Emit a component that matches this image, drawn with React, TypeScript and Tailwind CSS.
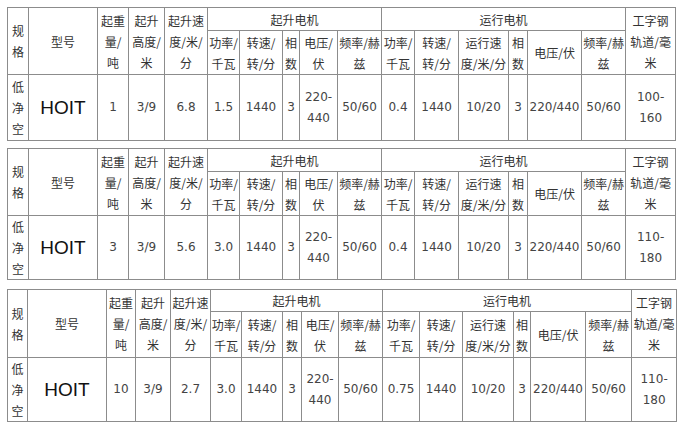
import React from 'react';

type Spec = {
    cols: string[];
    rows: string[];
    gap: string;
    load: string;
    speed: string;
    power: string;
    travelPower: string;
    rail: [string, string];
};

const tables: Spec[] = [
    {
        cols: ['w-[21px]', 'w-[69px]', 'w-[31px]', 'w-[36px]', 'w-[43px]', 'w-[32px]', 'w-[43px]', 'w-[17px]', 'w-[38px]', 'w-[44px]', 'w-[33px]', 'w-[44px]', 'w-[50px]', 'w-[19px]', 'w-[54px]', 'w-[44px]', 'w-[50px]'],
        rows: ['h-[23px]', 'h-[44px]', 'h-[66px]'],
        gap: 'mt-0',
        load: '1',
        speed: '6.8',
        power: '1.5',
        travelPower: '0.4',
        rail: ['100-', '160'],
    },
    {
        cols: ['w-[21px]', 'w-[69px]', 'w-[31px]', 'w-[36px]', 'w-[43px]', 'w-[32px]', 'w-[43px]', 'w-[17px]', 'w-[38px]', 'w-[44px]', 'w-[33px]', 'w-[44px]', 'w-[50px]', 'w-[19px]', 'w-[54px]', 'w-[44px]', 'w-[50px]'],
        rows: ['h-[23px]', 'h-[44px]', 'h-[64px]'],
        gap: 'mt-[7px]',
        load: '3',
        speed: '5.6',
        power: '3.0',
        travelPower: '0.4',
        rail: ['110-', '180'],
    },
    {
        cols: ['w-[20px]', 'w-[79px]', 'w-[29px]', 'w-[35px]', 'w-[40px]', 'w-[31px]', 'w-[41px]', 'w-[19px]', 'w-[37px]', 'w-[44px]', 'w-[37px]', 'w-[43px]', 'w-[51px]', 'w-[17px]', 'w-[55px]', 'w-[46px]', 'w-[45px]'],
        rows: ['h-[21px]', 'h-[46px]', 'h-[64px]'],
        gap: 'mt-[9px]',
        load: '10',
        speed: '2.7',
        power: '3.0',
        travelPower: '0.75',
        rail: ['110-', '180'],
    },
];

const cell = 'border border-[#8c8c8c] p-0 text-center align-middle whitespace-nowrap overflow-visible';
const num = 'font-["DejaVu_Sans",sans-serif] text-[12px] text-[#444]';

function Lines({ parts }: { parts: string[] }) {
    return (
        <>
            {parts.map((p, i) => (
                <div key={i}>{p}</div>
            ))}
        </>
    );
}

function SpecTable({ t }: { t: Spec }) {
    return (
        <table className={`table-fixed border-collapse w-[669px] ${t.gap}`}>
            <colgroup>
                {t.cols.map((c, i) => (
                    <col key={i} className={c} />
                ))}
            </colgroup>
            <tbody>
                <tr className={t.rows[0]}>
                    <td rowSpan={2} className={cell}><Lines parts={['规', '格']} /></td>
                    <td rowSpan={2} className={cell}>型号</td>
                    <td rowSpan={2} className={cell}><Lines parts={['起重', '量/', '吨']} /></td>
                    <td rowSpan={2} className={cell}><Lines parts={['起升', '高度/', '米']} /></td>
                    <td rowSpan={2} className={cell}><Lines parts={['起升速', '度/米/', '分']} /></td>
                    <td colSpan={5} className={cell}>起升电机</td>
                    <td colSpan={6} className={cell}>运行电机</td>
                    <td rowSpan={2} className={cell}><Lines parts={['工字钢', '轨道/毫', '米']} /></td>
                </tr>
                <tr className={t.rows[1]}>
                    <td className={cell}><Lines parts={['功率/', '千瓦']} /></td>
                    <td className={cell}><Lines parts={['转速/', '转/分']} /></td>
                    <td className={cell}><Lines parts={['相', '数']} /></td>
                    <td className={cell}><Lines parts={['电压/', '伏']} /></td>
                    <td className={cell}><Lines parts={['频率/赫', '兹']} /></td>
                    <td className={cell}><Lines parts={['功率/', '千瓦']} /></td>
                    <td className={cell}><Lines parts={['转速/', '转/分']} /></td>
                    <td className={cell}><Lines parts={['运行速', '度/米/分']} /></td>
                    <td className={cell}><Lines parts={['相', '数']} /></td>
                    <td className={cell}>电压/伏</td>
                    <td className={cell}><Lines parts={['频率/赫', '兹']} /></td>
                </tr>
                <tr className={t.rows[2]}>
                    <td className={cell}><Lines parts={['低', '净', '空']} /></td>
                    <td className={`${cell} font-["Liberation_Sans",Arial,sans-serif] text-[19px] text-[#111]`}>HOIT</td>
                    <td className={`${cell} ${num}`}>{t.load}</td>
                    <td className={`${cell} ${num}`}>3/9</td>
                    <td className={`${cell} ${num}`}>{t.speed}</td>
                    <td className={`${cell} ${num}`}>{t.power}</td>
                    <td className={`${cell} ${num}`}>1440</td>
                    <td className={`${cell} ${num}`}>3</td>
                    <td className={`${cell} ${num}`}><Lines parts={['220-', '440']} /></td>
                    <td className={`${cell} ${num}`}>50/60</td>
                    <td className={`${cell} ${num}`}>{t.travelPower}</td>
                    <td className={`${cell} ${num}`}>1440</td>
                    <td className={`${cell} ${num}`}>10/20</td>
                    <td className={`${cell} ${num}`}>3</td>
                    <td className={`${cell} ${num}`}>220/440</td>
                    <td className={`${cell} ${num}`}>50/60</td>
                    <td className={`${cell} ${num}`}><Lines parts={t.rail} /></td>
                </tr>
            </tbody>
        </table>
    );
}

export default function App() {
    return (
        <div className='min-h-screen bg-white pt-[7px] pl-[7px] font-["Noto_Sans_CJK_SC",sans-serif] text-[12px] leading-[21px] text-[#333]'>
            {tables.map((t, i) => (
                <SpecTable key={i} t={t} />
            ))}
        </div>
    );
}
